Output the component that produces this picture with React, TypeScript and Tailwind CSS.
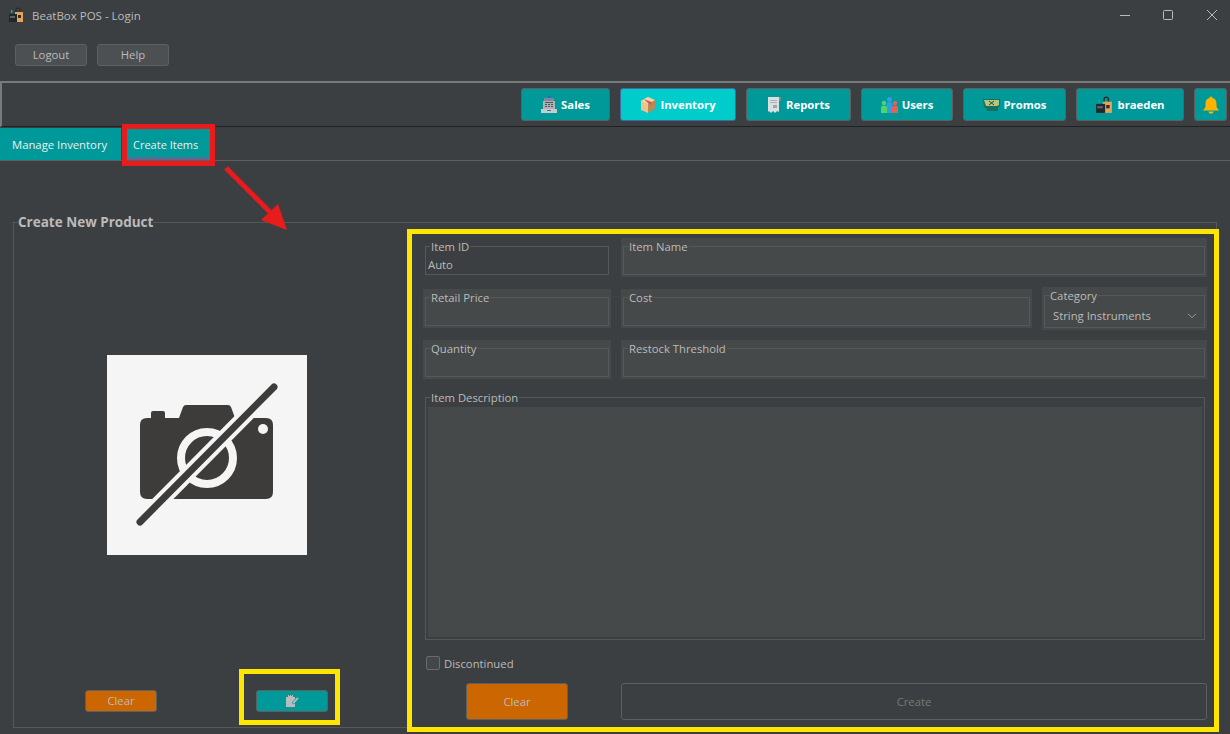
import { ReactNode } from "react";
import { ChevronDown } from "lucide-react";

function LogoIcon({ size = 16 }: { size?: number }) {
    return (
        <svg width={size} height={size} viewBox="0 0 16 16">
            <path d="M8 6 L8 3 Q8 1 10 1 Q12 1 12 3 L12 6" fill="none" stroke="#2a2a2a" strokeWidth="1.2" />
            <rect x="7" y="5" width="8" height="10" fill="#e0a45c" />
            <rect x="10" y="8" width="3" height="3" fill="#3a2a1a" />
            <rect x="1" y="7" width="8" height="8" fill="#22272c" />
            <rect x="3" y="3" width="1.5" height="3" fill="#16a0b0" />
            <rect x="2" y="9" width="5" height="2" fill="#59646e" />
        </svg>
    );
}

function RegisterIcon() {
    return (
        <svg width="16" height="18" viewBox="0 0 16 18">
            <rect x="7" y="0" width="3" height="2" fill="#1f6fd0" />
            <rect x="3" y="2" width="10" height="3" fill="#7f8a90" />
            <rect x="2" y="5" width="12" height="8" fill="#aab4b8" />
            <rect x="4" y="6" width="8" height="1" fill="#4c5559" />
            <path d="M4 8h2v1H4zM7 8h2v1H7zM10 8h2v1h-2zM4 10h2v1H4zM7 10h2v1H7zM10 10h2v1h-2z" fill="#4c5559" />
            <rect x="0" y="13" width="16" height="4" fill="#c4cccf" />
            <rect x="6" y="14" width="4" height="1" fill="#5f6a6f" />
        </svg>
    );
}

function BoxIcon() {
    return (
        <svg width="16" height="18" viewBox="0 0 16 18">
            <path d="M8 1 L15 4 L15 13 L8 17 Z" fill="#b98a55" />
            <path d="M8 1 L1 5 L1 14 L8 17 Z" fill="#e8c48f" />
            <path d="M8 1 L15 4 L8 8 L1 5 Z" fill="#f0d6a8" />
            <path d="M4 3.2 L11.5 6 L11.5 9 L9 8 Z" fill="#e0504a" />
        </svg>
    );
}

function ReportIcon() {
    return (
        <svg width="15" height="18" viewBox="0 0 15 18">
            <path d="M1 1 H12 V16 L10 15 L8 17 L6 15 L4 17 L2 15 L1 16 Z" fill="#d9e0e0" />
            <rect x="12" y="1" width="2" height="4" fill="#7b8a8a" />
            <path d="M3 4h7v1H3zM3 6h7v1H3z" fill="#a7b3b3" />
            <path d="M6 9h4v3H6z" fill="#9aa8a8" />
        </svg>
    );
}

function UsersIcon() {
    return (
        <svg width="17" height="16" viewBox="0 0 17 16">
            <circle cx="8.5" cy="2.5" r="2.5" fill="#2f9ee8" />
            <path d="M5.5 16 V7.5 Q5.5 5 8.5 5 Q11.5 5 11.5 7.5 V16 Z" fill="#2f9ee8" />
            <circle cx="3" cy="6" r="2.2" fill="#4fd46a" />
            <path d="M0 16 V10.5 Q0 8.5 3 8.5 Q6 8.5 6 10.5 V16 Z" fill="#4fd46a" />
            <circle cx="14" cy="6" r="2.2" fill="#e8604f" />
            <path d="M11 16 V10.5 Q11 8.5 14 8.5 Q17 8.5 17 10.5 V16 Z" fill="#e8604f" />
        </svg>
    );
}

function TicketIcon() {
    return (
        <svg width="17" height="12" viewBox="0 0 17 12">
            <path d="M0 0 H17 V7 L15 8 V12 H4 L3 9 L1 8 Z" fill="#14705f" />
            <path d="M1 1 H16 V6 L14 7 H3 Z" fill="#b6c47e" />
            <path d="M6 2 L11 6 M11 2 L6 6" stroke="#2c4a3a" strokeWidth="1" />
        </svg>
    );
}

function UploadIcon() {
    return (
        <svg width="13" height="12" viewBox="0 0 13 12">
            <rect x="0" y="2" width="9" height="10" fill="#bbbbbb" />
            <path d="M2 2 V0 H3 V1 H4 V0 H5 V1 H6 V0 H7 V2 Z" fill="#bbbbbb" />
            <path d="M6 8 L11 2 L13 3.5 L8 9 Z" fill="#bbbbbb" stroke="#009999" strokeWidth="0.7" />
        </svg>
    );
}

function BellIcon() {
    return (
        <svg width="16" height="18" viewBox="0 0 16 18">
            <path d="M8 0.5 a1.4 1.4 0 0 1 1.4 1.6 C12.5 2.8 13.5 5 13.5 8 V11 L16 14.5 H0 L2.5 11 V8 C2.5 5 3.5 2.8 6.6 2.1 A1.4 1.4 0 0 1 8 0.5 Z" fill="#ffb300" />
            <path d="M5.5 15.5 H10.5 A2.5 2.2 0 0 1 5.5 15.5 Z" fill="#ffb300" />
        </svg>
    );
}

function NoImage() {
    return (
        <svg width="200" height="200" viewBox="0 0 200 200" className="block">
            <rect width="200" height="200" fill="#f5f5f5" />
            <path
                d="M40 63 H44 V58 Q44 56 46 56 H56 Q58 56 58 58 V63 H72 L76 52 Q77 50 79 50 H121 Q123 50 124 52 L128 63 H159 Q166 63 166 70 V137 Q166 144 159 144 H40 Q33 144 33 137 V70 Q33 63 40 63 Z"
                fill="#3d3c3a"
            />
            <circle cx="100" cy="103" r="26" fill="#3d3c3a" stroke="#f5f5f5" strokeWidth="8" />
            <circle cx="156" cy="74" r="5" fill="#f5f5f5" />
            <path d="M33 167 L167 32" stroke="#f5f5f5" strokeWidth="15" />
            <path d="M33 167 L167 32" stroke="#3d3c3a" strokeWidth="7" strokeLinecap="round" />
        </svg>
    );
}

function NavButton({ icon, label, width, active }: { icon: ReactNode; label?: string; width: string; active?: boolean }) {
    return (
        <button
            type="button"
            className={`${width} h-[33px] flex items-center justify-center gap-[4px] rounded-[3px] border font-bold text-white ${
                active ? "bg-[#00cccc] border-[#46689c]" : "bg-[#009999] border-[#5e6060]"
            }`}
        >
            {icon}
            {label && <span className="pt-px">{label}</span>}
        </button>
    );
}

function Field({
    label,
    className = "",
    filled = true,
    children,
    height = "h-[37px]",
}: {
    label: string;
    className?: string;
    filled?: boolean;
    children?: ReactNode;
    height?: string;
}) {
    return (
        <div className={`px-[2px] pb-[2px] ${filled ? "bg-[#45494a]" : ""} ${className}`}>
            <fieldset className={`${height} border border-[#54585a] min-w-0`}>
                <legend className="ml-[4px] px-[1px] pt-px h-4 leading-4 text-[#bbbbbb]">{label}</legend>
                {children}
            </fieldset>
        </div>
    );
}

export default function App() {
    return (
        <div
            className="relative w-[1230px] h-[734px] overflow-hidden bg-[#3c3f41] text-[11.3px] text-[#bbbbbb]"
            style={{ fontFamily: '"Open Sans", "Noto Sans", sans-serif' }}
        >
            {/* Title bar */}
            <div className="h-[30px] flex items-center pl-[8px]">
                <LogoIcon />
                <span className="ml-[8px] pt-px text-[11.5px]">BeatBox POS - Login</span>
                <div className="ml-auto flex items-center">
                    <svg width="97" height="14" viewBox="0 0 97 14" className="mr-[13px]">
                        <path d="M0 7.5 H10" stroke="#bbbbbb" strokeWidth="1" />
                        <rect x="43.5" y="2.5" width="9" height="9" rx="1" fill="none" stroke="#bbbbbb" />
                        <path d="M87 2 L97 12 M97 2 L87 12" stroke="#bbbbbb" strokeWidth="1" />
                    </svg>
                </div>
            </div>

            {/* Session buttons */}
            <div className="h-[51px] pt-[14px] pl-[15px] flex items-start gap-[10px]">
                <button type="button" className="w-[72px] h-[22px] pt-px rounded-[3px] bg-[#4c5052] border border-[#5e6060]">
                    Logout
                </button>
                <button type="button" className="w-[72px] h-[22px] pt-px rounded-[3px] bg-[#4c5052] border border-[#5e6060]">
                    Help
                </button>
            </div>

            {/* Main nav */}
            <div className="h-[46px] border-t-2 border-t-[#787a7b] border-l-2 border-l-[#787a7b] border-b border-b-[#1f2122] pt-[5px] pr-[3px] flex justify-end gap-[10px]">
                <NavButton width="w-[89px]" icon={<RegisterIcon />} label="Sales" />
                <NavButton width="w-[116px]" icon={<BoxIcon />} label="Inventory" active />
                <NavButton width="w-[105px]" icon={<ReportIcon />} label="Reports" />
                <NavButton width="w-[92px]" icon={<UsersIcon />} label="Users" />
                <NavButton width="w-[103px]" icon={<TicketIcon />} label="Promos" />
                <NavButton width="w-[108px]" icon={<LogoIcon size={18} />} label="braeden" />
                <NavButton width="w-[33px]" icon={<BellIcon />} />
            </div>

            {/* Tabs */}
            <div className="mt-px h-[33px] border-b border-b-[#5e6060] flex gap-px">
                <div className="w-[121px] h-[32px] bg-[#009999] pl-[12px] pt-[2px] flex items-center text-[#eeeeee]">Manage Inventory</div>
                <div className="w-[88px] h-[32px] bg-[#009999] pl-[11px] pt-[5px] flex items-center text-[#eeeeee] text-[11px] border-b-[3px] border-b-[#5a6a90]">
                    Create Items
                </div>
            </div>

            {/* Create form */}
            <div className="pt-[53px] px-[13px]">
                <fieldset className="h-[514px] border border-[#54585a] min-w-0">
                    <legend className="ml-[4px] leading-4 text-[13.5px] font-bold text-[#bbbbbb]">Create New Product</legend>
                    <div className="flex">
                        <div className="w-[386px] shrink-0 flex flex-col items-center">
                            <div className="mt-[125px]">
                                <NoImage />
                            </div>
                            <div className="mt-[135px] w-full flex pl-[71px] gap-[99px]">
                                <button type="button" className="w-[72px] h-[22px] pt-px rounded-[3px] bg-[#cc6600] border border-[#5e6060]">
                                    Clear
                                </button>
                                <button type="button" className="w-[72px] h-[22px] rounded-[3px] bg-[#009999] border border-[#5e6060] flex items-center justify-center">
                                    <UploadIcon />
                                </button>
                            </div>
                        </div>

                        <div className="ml-[23px] w-[784px] pt-[8px] flex flex-col">
                            <div className="flex gap-[10px]">
                                <Field label="Item ID" filled={false} className="w-[188px]">
                                    <div className="pt-[3px] pl-[2px] leading-4">Auto</div>
                                </Field>
                                <Field label="Item Name" className="flex-1" />
                            </div>
                            <div className="mt-[10px] flex items-center gap-[10px]">
                                <Field label="Retail Price" className="w-[188px]" />
                                <Field label="Cost" className="w-[411px]" />
                                <Field label="Category" className="w-[165px]" height="h-[41px]">
                                    <div className="pt-[5px] pl-[8px] pr-[5px] leading-4 flex items-center justify-between">
                                        <span>String Instruments</span>
                                        <ChevronDown size={14} strokeWidth={1.25} />
                                    </div>
                                </Field>
                            </div>
                            <div className="mt-[10px] flex gap-[10px]">
                                <Field label="Quantity" className="w-[188px]" />
                                <Field label="Restock Threshold" className="flex-1" />
                            </div>
                            <div className="mt-[10px] px-[2px]">
                                <fieldset className="h-[251px] border border-[#54585a] min-w-0 px-[2px] pb-[2px]">
                                    <legend className="ml-[2px] px-[1px] pt-px h-4 leading-4">Item Description</legend>
                                    <div className="mt-[2px] h-[230px] bg-[#45494a]" />
                                </fieldset>
                            </div>
                            <label className="mt-[16px] ml-[3px] h-[14px] flex items-center gap-[4px]">
                                <span className="w-[14px] h-[14px] rounded-[2px] border border-[#6b6b6b] bg-[#43474a]" />
                                <span className="pt-[2px]">Discontinued</span>
                            </label>
                            <div className="mt-[13px] flex">
                                <button type="button" className="ml-[43px] w-[102px] h-[37px] pt-px rounded-[3px] bg-[#cc6600] border border-[#5e6060]">
                                    Clear
                                </button>
                                <button type="button" className="ml-[53px] flex-1 h-[37px] pt-px rounded-[3px] border border-[#5e6060] text-[#777777]">
                                    Create
                                </button>
                            </div>
                        </div>
                    </div>
                </fieldset>
            </div>

            {/* Annotations drawn over the screenshot */}
            <div className="absolute left-[122px] top-[124px] w-[93px] h-[42px] border-[5px] border-[#e81c1c]" />
            <svg className="absolute left-[220px] top-[160px]" width="75" height="75" viewBox="0 0 75 75">
                <path d="M6 8 L50 52" stroke="#e81c1c" strokeWidth="5" />
                <path d="M67 70 L41 60 L58 44 Z" fill="#e81c1c" />
            </svg>
            <div className="absolute left-[407px] top-[229px] w-[812px] h-[503px] border-[5px] border-[#ffe600]" />
            <div className="absolute left-[239px] top-[669px] w-[101px] h-[56px] border-[5px] border-[#ffe600]" />
        </div>
    );
}
